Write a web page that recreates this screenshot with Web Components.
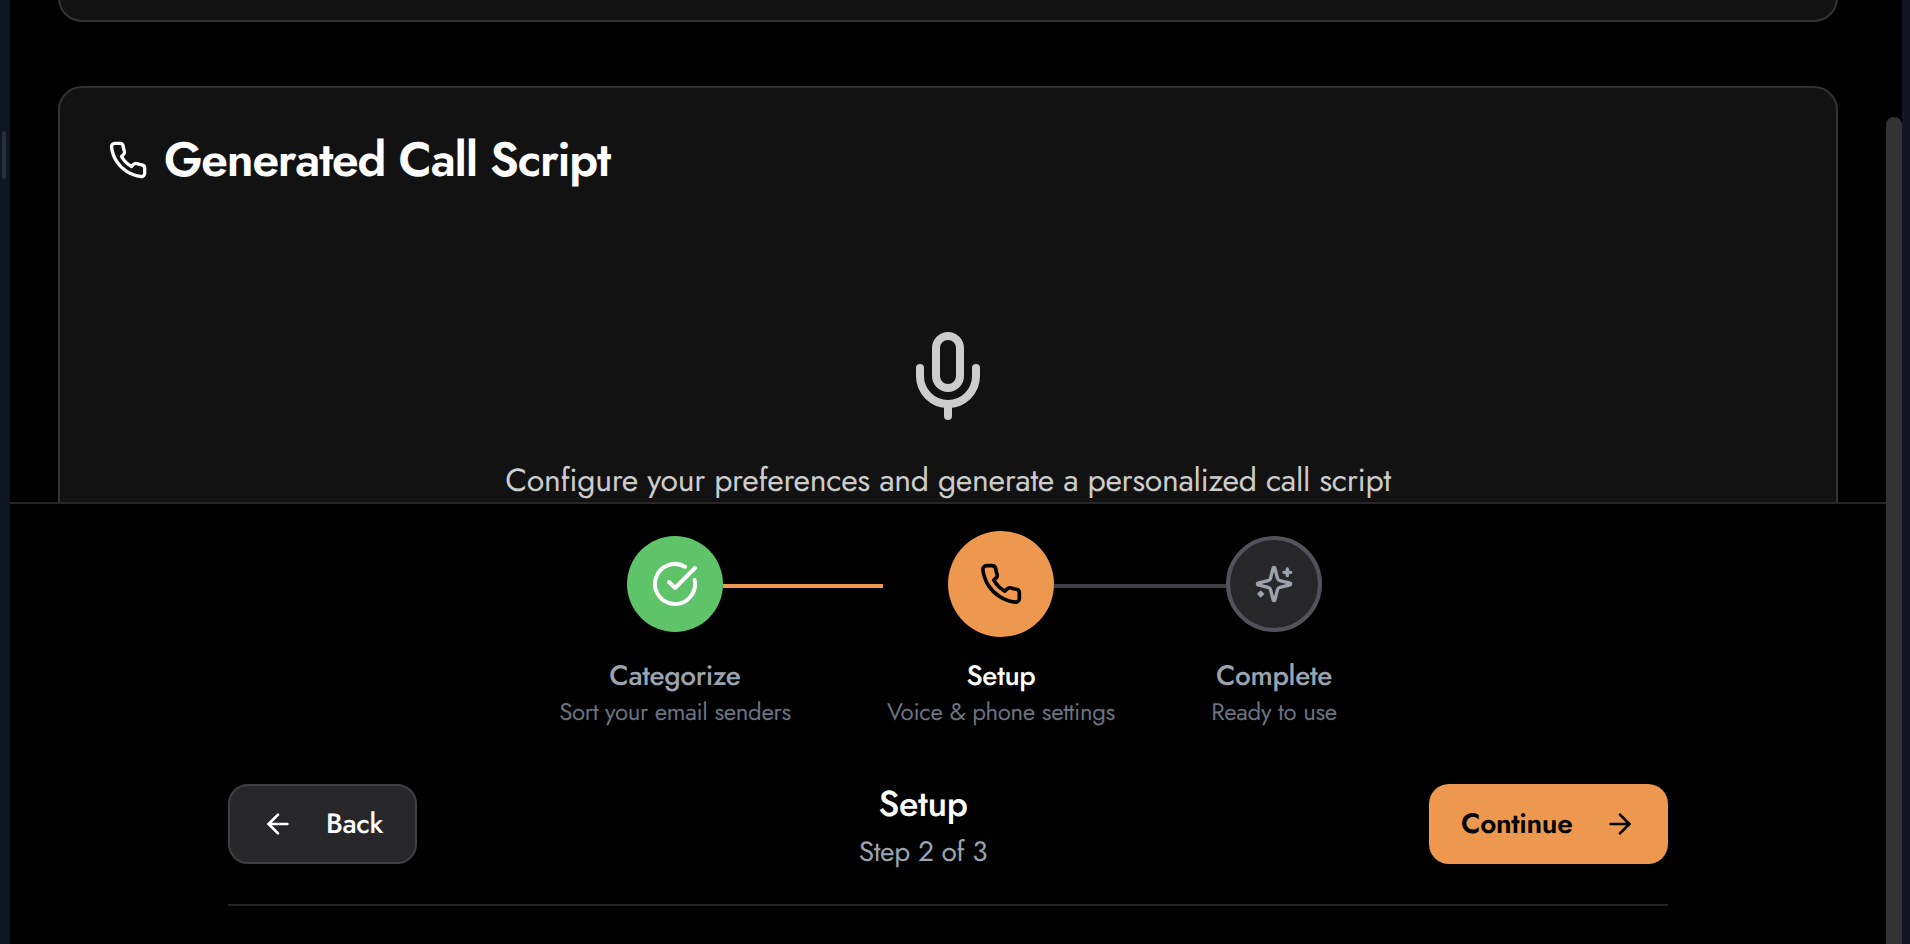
<!DOCTYPE html>
<html lang="en">
<head>
<meta charset="utf-8">
<title>Setup</title>
<style>
  html, body { margin: 0; height: 100%; background: #000; overflow: hidden; }
  body { font-family: Jost, Lato, sans-serif; letter-spacing: -0.32px; text-rendering: geometricPrecision; color: #fff; }
</style>
</head>
<body>
<app-shell>
  <content-card slot="content" class="previous"></content-card>
  <content-card slot="content">
    <ui-icon slot="icon" name="phone" size="40"></ui-icon>
    <ui-text slot="title" width="446" size="48" weight="600" line="48">Generated Call Script</ui-text>
    <empty-state>
      <ui-icon slot="icon" name="mic" size="96"></ui-icon>
      <ui-text size="32" line="48">Configure your preferences and generate a personalized call script</ui-text>
    </empty-state>
  </content-card>
  <progress-steps slot="footer">
    <progress-step state="done" style="--w:232px;--line:160px">
      <ui-icon slot="icon" name="check" size="48"></ui-icon>
      <ui-text slot="label" size="28" weight="500" line="40">Categorize</ui-text>
      <ui-text slot="hint" size="24" line="32">Sort your email senders</ui-text>
    </progress-step>
    <progress-step state="active" style="--w:228px;--line:172px">
      <ui-icon slot="icon" name="phone" size="44"></ui-icon>
      <ui-text slot="label" size="28" weight="500" line="40">Setup</ui-text>
      <ui-text slot="hint" size="24" line="32">Voice &amp; phone settings</ui-text>
    </progress-step>
    <progress-step state="todo" style="--w:126px">
      <ui-icon slot="icon" name="sparkles" size="40"></ui-icon>
      <ui-text slot="label" size="28" weight="500" line="40">Complete</ui-text>
      <ui-text slot="hint" size="24" line="32">Ready to use</ui-text>
    </progress-step>
  </progress-steps>
  <step-nav slot="footer">
    <nav-button slot="back" style="--w:189px">
      <ui-icon name="left" size="32"></ui-icon>
      <ui-text size="28" weight="500" line="40">Back</ui-text>
    </nav-button>
    <ui-text slot="title" size="36" weight="500" line="56">Setup</ui-text>
    <ui-text slot="count" size="28" line="40">Step 2 of 3</ui-text>
    <nav-button slot="next" primary style="--w:239px">
      <ui-text size="28" weight="600" line="40">Continue</ui-text>
      <ui-icon name="right" size="32"></ui-icon>
    </nav-button>
  </step-nav>
</app-shell>

<script>
class Base extends HTMLElement {
  constructor() {
    super();
    this.attachShadow({ mode: 'open' }).innerHTML = this.constructor.html || '';
  }
}

const ICONS = {
  phone: '<path d="M22 16.92v3a2 2 0 0 1-2.18 2 19.79 19.79 0 0 1-8.63-3.07 19.5 19.5 0 0 1-6-6 19.79 19.79 0 0 1-3.07-8.67A2 2 0 0 1 4.11 2h3a2 2 0 0 1 2 1.72 12.84 12.84 0 0 0 .7 2.81 2 2 0 0 1-.45 2.11L8.09 9.91a16 16 0 0 0 6 6l1.27-1.27a2 2 0 0 1 2.11-.45 12.84 12.84 0 0 0 2.81.7A2 2 0 0 1 22 16.92z"/>',
  mic: '<path d="M12 19v3"/><path d="M19 10v2a7 7 0 0 1-14 0v-2"/><rect x="9" y="2" width="6" height="13" rx="3"/>',
  check: '<path d="M21.801 10A10 10 0 1 1 17 3.335"/><path d="m9 11 3 3L22 4"/>',
  sparkles: '<path d="M9.937 15.5A2 2 0 0 0 8.5 14.063l-6.135-1.582a.5.5 0 0 1 0-.962L8.5 9.936A2 2 0 0 0 9.937 8.5l1.582-6.135a.5.5 0 0 1 .963 0L14.063 8.5A2 2 0 0 0 15.5 9.937l6.135 1.581a.5.5 0 0 1 0 .964L15.5 14.063a2 2 0 0 0-1.437 1.437l-1.582 6.135a.5.5 0 0 1-.963 0z"/><path d="M20 3v4"/><path d="M22 5h-4"/><path d="M4 17v2"/><path d="M5 18H3"/>',
  left: '<path d="m12 19-7-7 7-7"/><path d="M19 12H5"/>',
  right: '<path d="M5 12h14"/><path d="m12 5 7 7-7 7"/>'
};

customElements.define('ui-icon', class extends Base {
  connectedCallback() {
    const s = this.getAttribute('size');
    this.shadowRoot.innerHTML = `<style>
      :host { display: block; flex: none; width: ${s}px; height: ${s}px; }
      svg { display: block; fill: none; stroke: currentColor; stroke-width: 2; stroke-linecap: round; stroke-linejoin: round; }
    </style><svg width="${s}" height="${s}" viewBox="0 0 24 24">${ICONS[this.getAttribute('name')]}</svg>`;
  }
});

// A single line of text; with a width attribute it is tracked to fill that width.
customElements.define('ui-text', class extends Base {
  connectedCallback() {
    const a = n => this.getAttribute(n);
    this.shadowRoot.innerHTML = `<style>
      :host { display: block; flex: none; font-size: ${a('size')}px; font-weight: ${a('weight') || 400}; line-height: ${a('line')}px; white-space: nowrap; }
      span { display: inline-block; vertical-align: top; }
    </style><span><slot></slot></span>`;
  }
  fit() {
    const span = this.shadowRoot.querySelector('span');
    span.style.letterSpacing = '0px';
    const spare = this.getAttribute('width') - span.getBoundingClientRect().width;
    span.style.letterSpacing = spare / this.textContent.trim().length + 'px';
  }
});

customElements.define('content-card', class extends Base {
  static html = `<style>
    :host { display: block; box-sizing: border-box; flex: none; height: 500px; border: 2px solid #333; border-radius: 24px; background: #121212; padding: 48px; }
    :host(.previous) { height: 100px; margin-top: -78px; }
    header { display: flex; align-items: center; gap: 16px; height: 48px; }
  </style><header><slot name="icon"></slot><slot name="title"></slot></header><slot></slot>`;
});

customElements.define('empty-state', class extends Base {
  static html = `<style>
    :host { display: flex; flex-direction: column; align-items: center; gap: 33px; padding-top: 144px; color: #ccc; }
  </style><slot name="icon"></slot><slot></slot>`;
});

customElements.define('progress-steps', class extends Base {
  static html = `<style>
    :host { display: flex; justify-content: center; gap: 96px; height: 240px; padding-top: 32px; }
  </style><slot></slot>`;
});

customElements.define('progress-step', class extends Base {
  static html = `<style>
    :host { display: flex; flex-direction: column; align-items: center; width: var(--w); color: #9ca3af; }
    .dot { position: relative; box-sizing: border-box; display: grid; place-items: center; width: 96px; height: 96px; border-radius: 50%; margin-bottom: 24px; }
    .dot::after { content: ""; position: absolute; left: 100%; top: 48px; width: var(--line, 0px); height: 4px; }
    :host([state=done]) .dot { background: #5fc469; color: #fff; }
    :host([state=done]) .dot::after { background: #ee974f; }
    :host([state=active]) .dot { width: 106px; height: 106px; margin: -5px 0 19px; background: #ee974f; color: #000; }
    :host([state=active]) .dot::after { top: 53px; background: #3f3f46; }
    :host([state=active]) { color: #fff; }
    :host([state=todo]) .dot { background: #27272a; border: 4px solid #52525b; }
    .hint { color: #6b7280; }
  </style><div class="dot"><slot name="icon"></slot></div><slot name="label"></slot><div class="hint"><slot name="hint"></slot></div>`;
});

customElements.define('step-nav', class extends Base {
  static html = `<style>
    :host { display: flex; align-items: center; justify-content: space-between; width: 1440px; height: 96px; margin: 0 auto; padding-bottom: 32px; border-bottom: 2px solid #262626; }
    .mid { display: flex; flex-direction: column; align-items: center; }
    .count { color: #9ca3af; }
  </style><slot name="back"></slot><div class="mid"><slot name="title"></slot><div class="count"><slot name="count"></slot></div></div><slot name="next"></slot>`;
});

customElements.define('nav-button', class extends Base {
  static html = `<style>
    :host { display: flex; align-items: center; justify-content: space-between; box-sizing: border-box; width: var(--w); height: 80px; padding: 0 32px; border: 2px solid #3f3f46; border-radius: 20px; background: #27272a; }
    :host([primary]) { border: 0; background: #ee974f; color: #000; }
  </style><slot></slot>`;
});

customElements.define('app-shell', class extends Base {
  static html = `<style>
    :host { display: grid; grid-template-columns: 10px 1876px 16px 8px; width: 1910px; height: 944px; }
    .edge { background: #0f1522; }
    .grip { width: 4px; height: 48px; margin: 131px 0 0 2px; border-radius: 2px; background: #272d3f; }
    main { display: flex; flex-direction: column; min-width: 0; height: 944px; overflow: hidden; }
    .view { display: flex; flex-direction: column; gap: 64px; height: 502px; box-sizing: border-box; padding: 0 48px; overflow: hidden; }
    footer { flex: 1; border-top: 2px solid #262626; background: #000; }
    .track { background: #000; padding-top: 117px; box-sizing: border-box; display: flex; }
    .thumb { flex: 1; border-radius: 8px 8px 0 0; background: #333; }
  </style>
  <div class="edge"><div class="grip"></div></div>
  <main><div class="view"><slot name="content"></slot></div><footer><slot name="footer"></slot></footer></main>
  <div class="track"><div class="thumb"></div></div>
  <div class="edge"></div>`;
});

document.querySelectorAll('ui-text[width]').forEach(t => t.fit());
</script>
</body>
</html>
